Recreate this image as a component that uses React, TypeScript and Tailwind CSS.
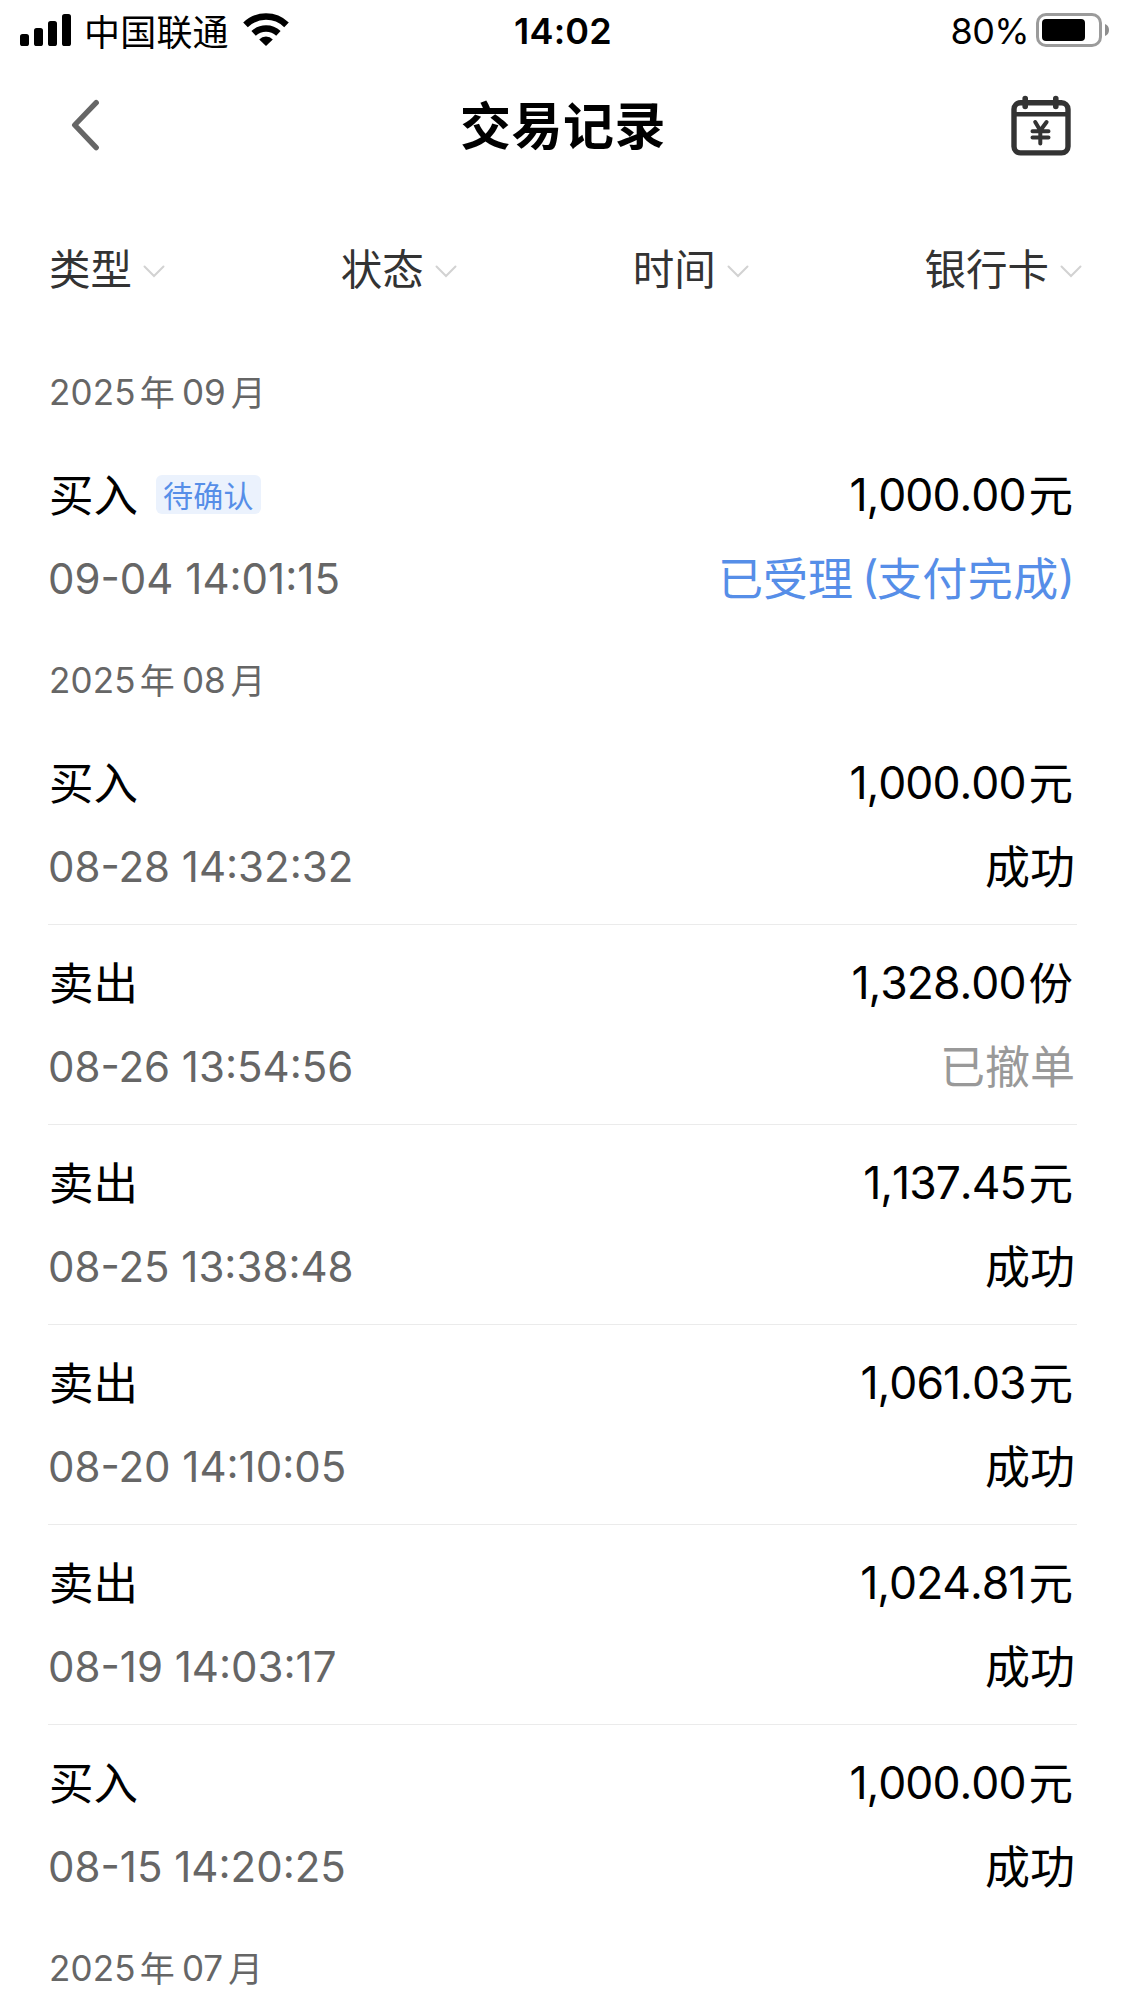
import { Fragment } from "react";

type Tone = "done" | "pending" | "cancelled";

interface Trade {
  kind: string;
  tag?: string;
  time: string;
  amount: string;
  unit: string;
  status: string;
  tone: Tone;
}

interface Month {
  year: string;
  month: string;
  trades: Trade[];
}

const months: Month[] = [
  {
    year: "2025",
    month: "09",
    trades: [
      { kind: "买入", tag: "待确认", time: "09-04 14:01:15", amount: "1,000.00", unit: "元", status: "已受理", tone: "pending" },
    ],
  },
  {
    year: "2025",
    month: "08",
    trades: [
      { kind: "买入", time: "08-28 14:32:32", amount: "1,000.00", unit: "元", status: "成功", tone: "done" },
      { kind: "卖出", time: "08-26 13:54:56", amount: "1,328.00", unit: "份", status: "已撤单", tone: "cancelled" },
      { kind: "卖出", time: "08-25 13:38:48", amount: "1,137.45", unit: "元", status: "成功", tone: "done" },
      { kind: "卖出", time: "08-20 14:10:05", amount: "1,061.03", unit: "元", status: "成功", tone: "done" },
      { kind: "卖出", time: "08-19 14:03:17", amount: "1,024.81", unit: "元", status: "成功", tone: "done" },
      { kind: "买入", time: "08-15 14:20:25", amount: "1,000.00", unit: "元", status: "成功", tone: "done" },
    ],
  },
  { year: "2025", month: "07", trades: [] },
];

const toneClass: Record<Tone, string> = {
  done: "text-black",
  pending: "text-[#568ee8]",
  cancelled: "text-[#999999]",
};

function StatusBar() {
  return (
    <div className="flex h-15 items-center text-black">
      <div className="flex flex-1 items-center pl-5">
        <svg width="52" height="32" viewBox="0 0 52 32" fill="currentColor">
          <rect x="0" y="20" width="9" height="12" rx="2.6" />
          <rect x="14" y="14" width="9" height="18" rx="2.6" />
          <rect x="28" y="7" width="9" height="25" rx="2.6" />
          <rect x="42" y="0" width="9" height="32" rx="2.6" />
        </svg>
        <span className="ml-3 text-[36px] leading-[60px] tracking-[0.2px]">中国联通</span>
        <svg className="ml-3.5" width="46" height="34" viewBox="0 0 46 34" fill="none" stroke="currentColor">
          <path d="M2.5 11.8 A29.5 29.5 0 0 1 43.5 11.8" strokeWidth="6.6" />
          <path d="M10.6 20.4 A18 18 0 0 1 35.4 20.4" strokeWidth="6.4" />
          <path d="M23 33 L16.2 26.4 A9.6 9.6 0 0 1 29.8 26.4 Z" fill="currentColor" stroke="none" />
        </svg>
      </div>
      <div className="-ml-1 pt-0.5 font-['Inter'] text-[36px] leading-[60px] font-semibold tracking-[0.2px]">14:02</div>
      <div className="flex flex-1 items-center justify-end pr-[15px]">
        <span className="pt-0.5 font-['Inter'] text-[36px] leading-[60px] tracking-[-0.6px]">80%</span>
        <svg className="ml-[7px]" width="74" height="34" viewBox="0 0 74 34">
          <rect x="1.5" y="1.5" width="63" height="31" rx="8.5" fill="none" stroke="#9b9b9b" strokeWidth="3" />
          <rect x="6" y="6" width="43" height="22" rx="4" fill="#000" />
          <path d="M69 11 Q73 12.5 73 17 Q73 21.5 69 23 Z" fill="#8e8e8e" />
        </svg>
      </div>
    </div>
  );
}

function Header() {
  return (
    <div className="flex h-32.5 items-center justify-between pr-[54px] pl-[71px]">
      <svg width="60" height="52" viewBox="0 0 60 52" fill="none" stroke="#666666" strokeWidth="5.4" strokeLinecap="round" strokeLinejoin="round">
        <path d="M25.2 3.7 L3.7 26 L25.2 48.6" />
      </svg>
      <h1 className="-ml-4 pb-[5px] text-[51px] leading-[72px] font-bold tracking-[0.5px] text-black">交易记录</h1>
      <svg width="60" height="62" viewBox="0 0 60 62" fill="none" stroke="#333333" strokeLinecap="round" strokeLinejoin="round">
        <rect x="3" y="8.7" width="54" height="50.2" rx="6.5" strokeWidth="5.4" />
        <path d="M3 20.3 H57" strokeWidth="4.6" strokeLinecap="butt" />
        <path d="M14.2 4.5 V12.5 M44.8 4.5 V12.5" strokeWidth="5.6" />
        <path d="M24.2 28 L29.3 36.5 L35.6 28 M29.3 36.5 V49.5 M21.5 37.3 H37.5 M21.5 43.6 H37.5" strokeWidth="4" />
      </svg>
    </div>
  );
}

function Filters() {
  return (
    <div className="flex h-[158px] items-center justify-between pr-[43px] pl-12 text-[#333333]">
      {["类型", "状态", "时间", "银行卡"].map((name) => (
        <button key={name} className="flex items-center gap-[11px]">
          <span className="pb-1 pl-px text-[41.5px] leading-[60px]">{name}</span>
          <svg className="mt-[5px]" width="22" height="14" viewBox="0 0 22 14" fill="none" stroke="#d2d2d2" strokeWidth="2" strokeLinecap="round">
            <path d="M1.5 1.5 L11 11 L20.5 1.5" />
          </svg>
        </button>
      ))}
    </div>
  );
}

function TradeRow({ trade, first }: { trade: Trade; first: boolean }) {
  return (
    <div className={first ? "h-50 pt-4" : "h-50 border-t border-[#ebebeb] pt-[15px]"}>
      <div className="flex h-21 items-center justify-between pr-1 text-[44.5px] text-black">
        <div className="flex items-center">
          <span className="pb-px pl-px">{trade.kind}</span>
          {trade.tag && (
            <span className="ml-[18px] flex h-[39px] items-center rounded-md bg-[#ebf2fd] px-[7px] text-[30px] tracking-[0.3px] text-[#568ee8]">
              {trade.tag}
            </span>
          )}
        </div>
        <div className="flex items-center">
          <span className="pt-0.5 font-['Inter'] tracking-[-1px] [font-kerning:none]">{trade.amount}</span>
          <span className="ml-[3px] pb-px">{trade.unit}</span>
        </div>
      </div>
      <div className="flex h-21 items-center justify-between pr-0.5">
        <span className="font-['Inter'] text-[42px] text-[#666666]">{trade.time}</span>
        <span className={`flex items-center pb-0.5 text-[45px] ${toneClass[trade.tone]}`}>
          {trade.status}
          {trade.tone === "pending" && (
            <>
              <span className="ml-[9px] font-['Inter'] tracking-[-1.5px]">(</span>
              <span className="tracking-[0.4px]">支付完成</span>
              <span className="font-['Inter']">)</span>
            </>
          )}
        </span>
      </div>
    </div>
  );
}

export default function App() {
  return (
    <div className="h-[2001px] w-[1125px] overflow-hidden bg-white font-['Noto_Sans_CJK_SC',sans-serif]">
      <StatusBar />
      <Header />
      <Filters />
      <div className="px-12">
        {months.map((m) => (
          <Fragment key={m.month}>
            <h2 className="flex h-22 items-center pl-px text-[35px] text-[#666666]">
              <span className="font-['Inter'] tracking-[0.2px]">{m.year}</span>
              <span className="mr-[7px] ml-1 pb-0.5">年</span>
              <span className="font-['Inter']">{m.month}</span>
              <span className="ml-[5px] pb-0.5">月</span>
            </h2>
            {m.trades.map((t, i) => (
              <TradeRow key={t.time} trade={t} first={i === 0} />
            ))}
          </Fragment>
        ))}
      </div>
    </div>
  );
}
